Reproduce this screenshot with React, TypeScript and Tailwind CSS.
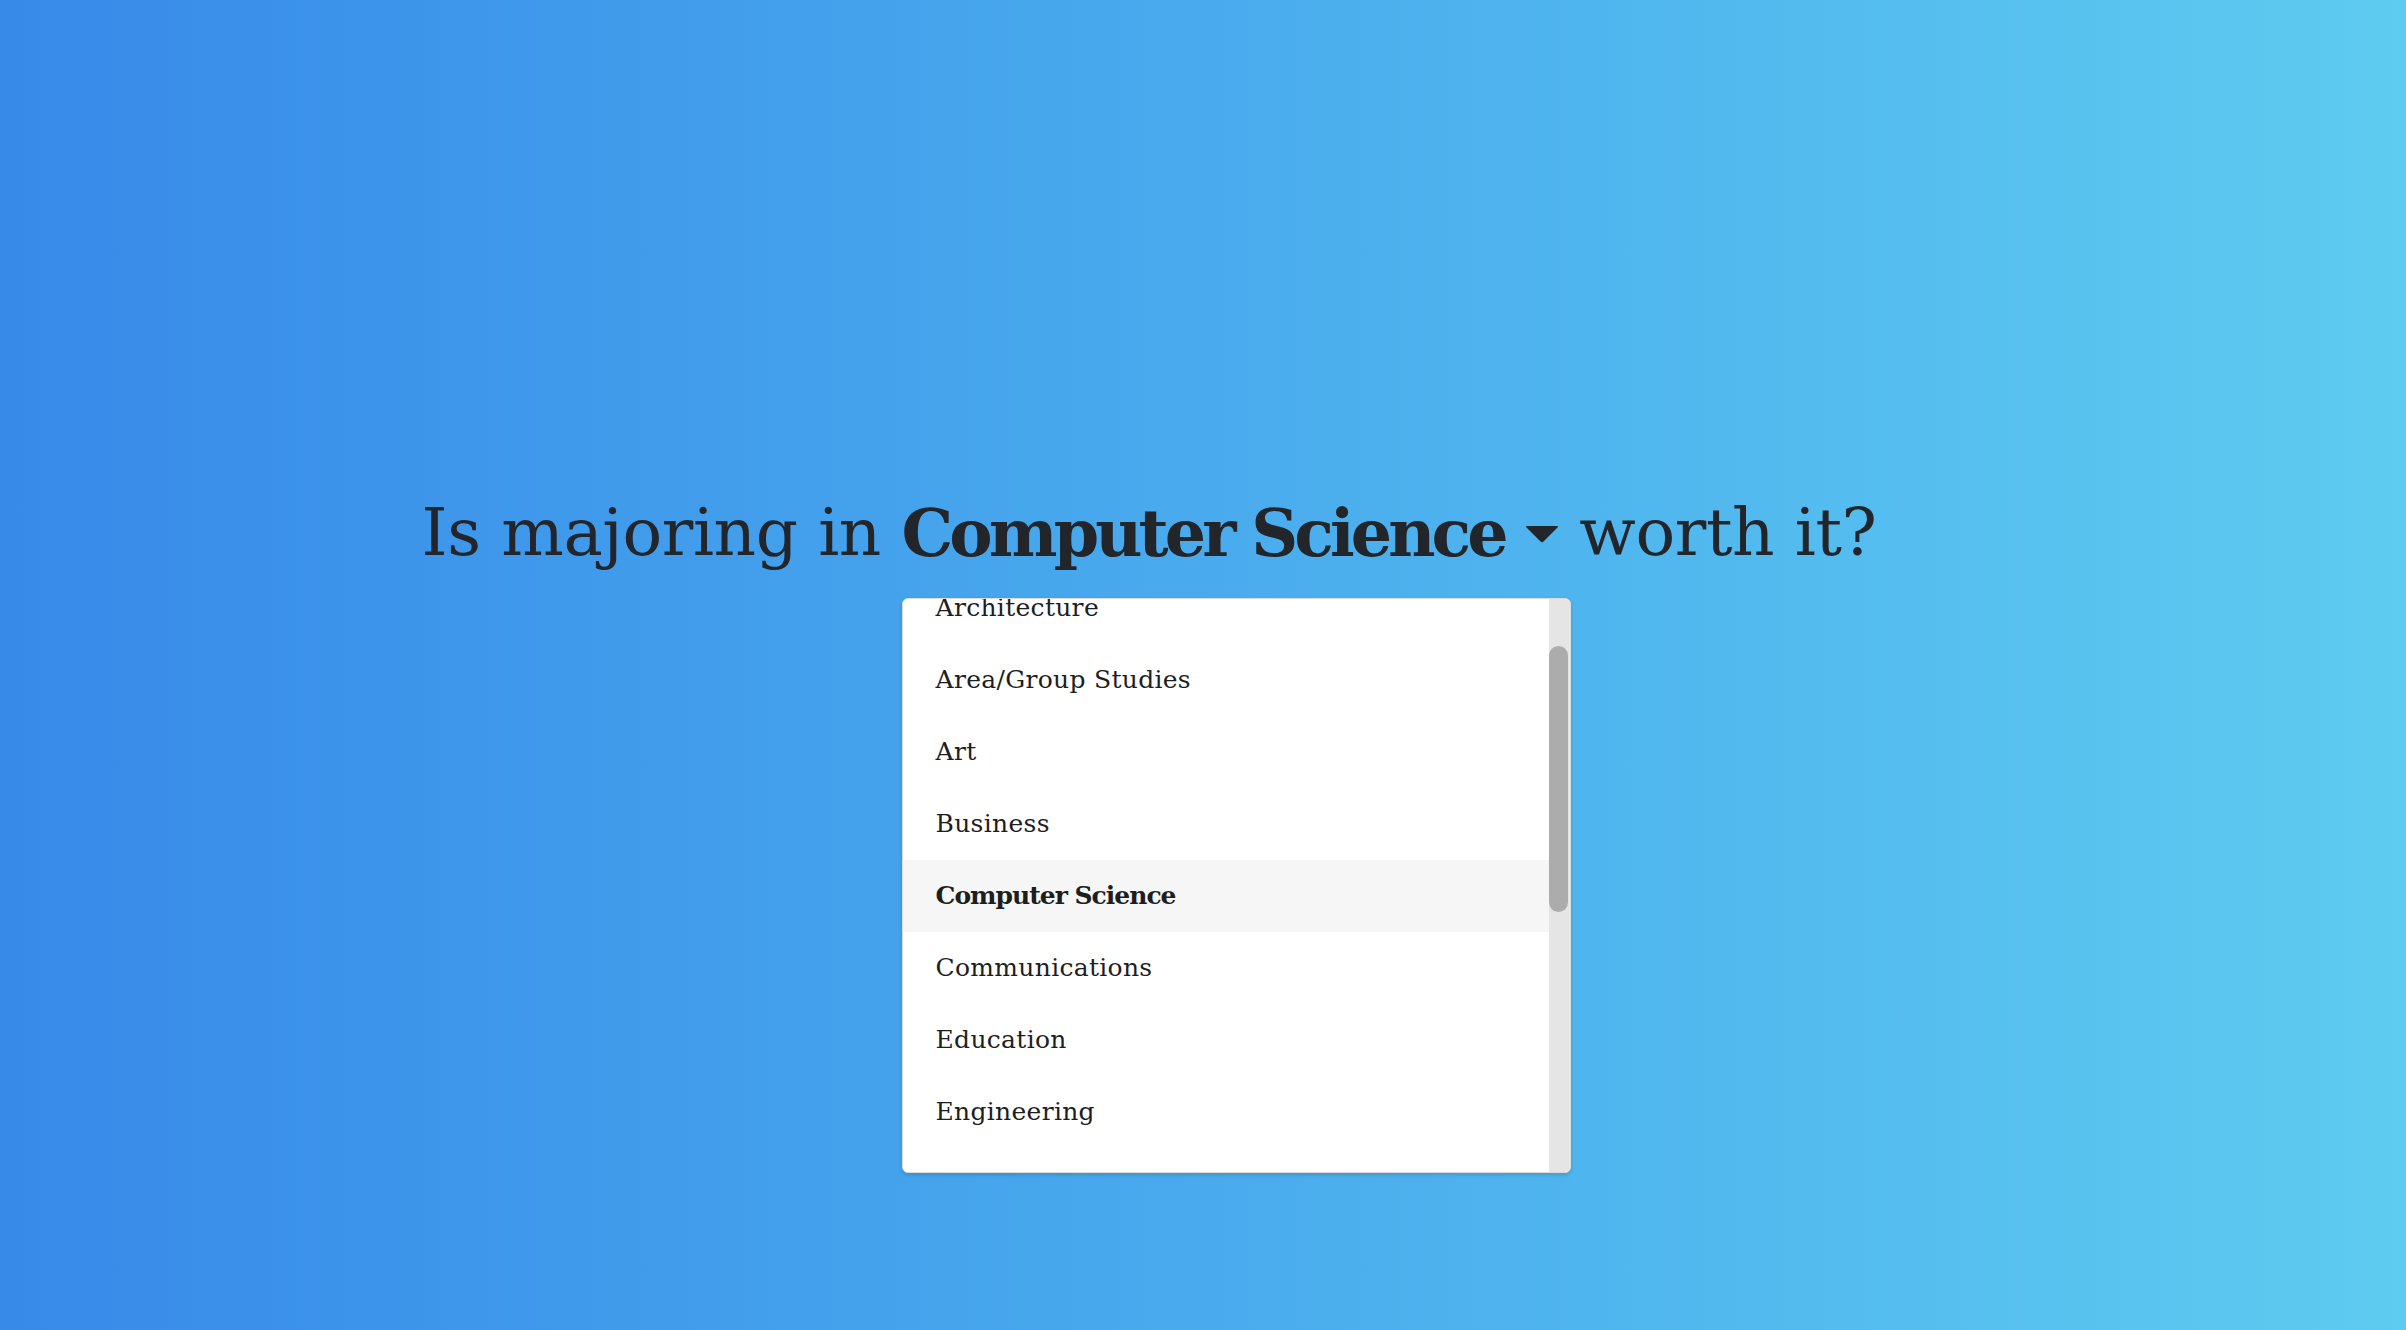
import React, { useEffect, useRef } from 'react';

const majors = [
  'Agriculture',
  'Architecture',
  'Area/Group Studies',
  'Art',
  'Business',
  'Computer Science',
  'Communications',
  'Education',
  'Engineering',
  'English',
  'Health',
  'History',
  'Math',
  'Philosophy',
  'Physical Sciences',
  'Psychology',
  'Social Sciences',
];

const selected = 'Computer Science';

const App = () => {
  const listRef = useRef<HTMLDivElement>(null);

  useEffect(() => {
    if (listRef.current) {
      listRef.current.scrollTop = 105;
    }
  }, []);

  return (
    <div
      className="min-h-screen w-full bg-gradient-to-r from-[#388ae9] to-[#5ecbf0] text-[#22252a]"
      style={{ fontFamily: '"DejaVu Serif", "Liberation Serif", serif' }}
    >
      <div className="flex justify-center pt-[491px] pr-[108px]">
        <h1 className="flex items-center whitespace-pre text-[66px] leading-[84px] font-normal tracking-[-0.4px]">
          <span>Is majoring in </span>
          <span className="relative inline-flex items-center">
            <button className="inline-flex items-center text-[65px] font-bold tracking-[-3.9px] cursor-pointer">
              {selected}
              <svg width="34" height="18" viewBox="0 0 34 18" className="ml-[20px] mt-[2px]">
                <path d="M2 1 L32 1 Q34 1 32.5 2.5 L18.5 16.5 Q17 18 15.5 16.5 L1.5 2.5 Q0 1 2 1 Z" fill="#22252a" />
              </svg>
            </button>

            {/* Dropdown */}
            <div className="absolute left-0 top-full mt-[23px] z-10 w-[669px] h-[575px] flex bg-white rounded-md border border-[#dcdcdc] shadow-[0_2px_4px_rgba(0,0,0,0.15)] overflow-hidden tracking-normal">
              <div ref={listRef} className="flex-1 h-full overflow-hidden py-[6px]">
                {majors.map((m) => (
                  <div
                    key={m}
                    className={`h-[72px] flex items-center pl-[33px] text-[25px] text-[#1e1e1e] ${
                      m === selected ? 'bg-[#f6f6f6] font-bold tracking-[-1px]' : 'font-normal tracking-[0.3px]'
                    }`}
                  >
                    {m}
                  </div>
                ))}
              </div>
              {/* Scrollbar */}
              <div className="w-[21px] h-full bg-[#e5e5e5] pt-[47px] pr-[2px]">
                <div className="w-[19px] h-[266px] rounded-full bg-[#acacac]" />
              </div>
            </div>
          </span>
          <span> worth it?</span>
        </h1>
      </div>
    </div>
  );
};

export default App;
